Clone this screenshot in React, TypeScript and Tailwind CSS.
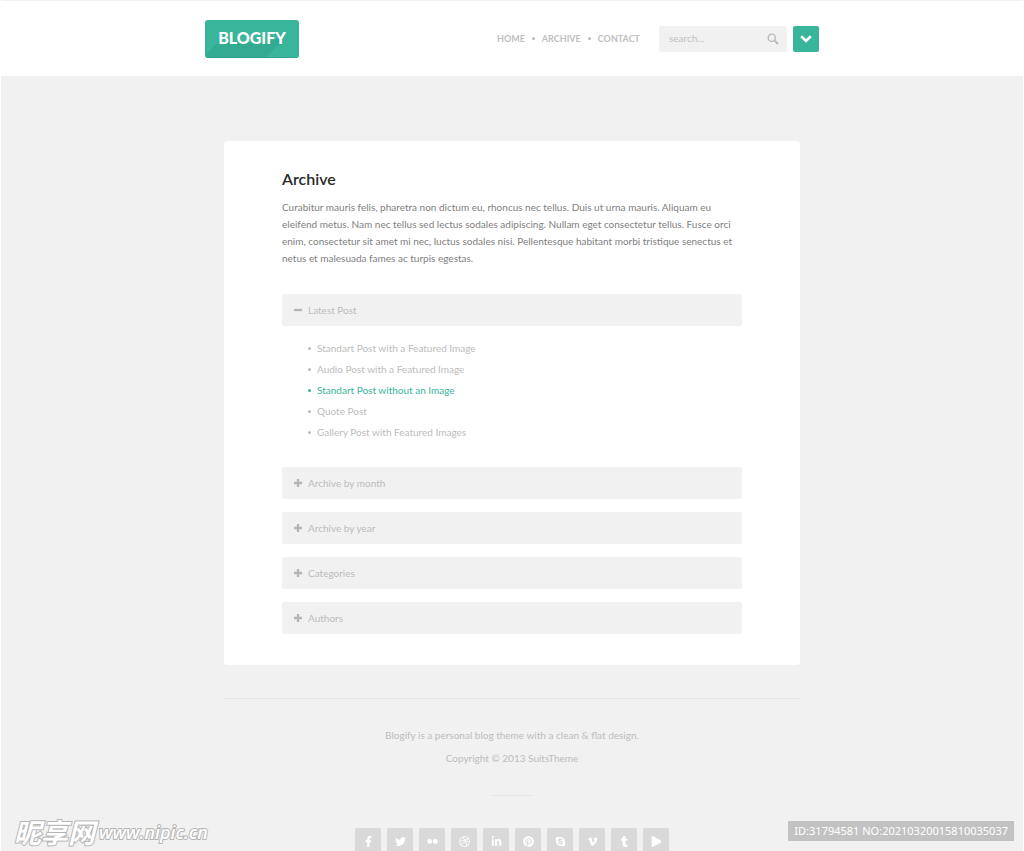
import { useState } from 'react';
import {
  FaDribbble,
  FaFacebookF,
  FaLinkedinIn,
  FaPinterest,
  FaPlay,
  FaSkype,
  FaTumblr,
  FaTwitter,
  FaVimeoV,
} from 'react-icons/fa';

const navLinks = ['Home', 'Archive', 'Contact'];

const sections = [
  {
    title: 'Latest Post',
    posts: [
      'Standart Post with a Featured Image',
      'Audio Post with a Featured Image',
      'Standart Post without an Image',
      'Quote Post',
      'Gallery Post with Featured Images',
    ],
  },
  { title: 'Archive by month', posts: [] },
  { title: 'Archive by year', posts: [] },
  { title: 'Categories', posts: [] },
  { title: 'Authors', posts: [] },
];

const activePost = 'Standart Post without an Image';

function FlickrDots({ className }: { className?: string }) {
  return (
    <svg viewBox="0 0 12 12" fill="currentColor" className={className}>
      <circle cx="2.9" cy="6" r="2.7" />
      <circle cx="9.1" cy="6" r="2.7" />
    </svg>
  );
}

const socials = [
  { name: 'Facebook', icon: FaFacebookF },
  { name: 'Twitter', icon: FaTwitter },
  { name: 'Flickr', icon: FlickrDots },
  { name: 'Dribbble', icon: FaDribbble },
  { name: 'LinkedIn', icon: FaLinkedinIn },
  { name: 'Pinterest', icon: FaPinterest },
  { name: 'Skype', icon: FaSkype },
  { name: 'Vimeo', icon: FaVimeoV },
  { name: 'Tumblr', icon: FaTumblr },
  { name: 'Video', icon: FaPlay },
];

function Logo() {
  return (
    <a href="#" className="relative flex h-[38px] w-[94px] items-center justify-center overflow-hidden rounded-[3px] border-b border-[#2fa58c] bg-[#38b59b]">
      <svg viewBox="0 0 94 38" className="absolute inset-0 h-full w-full" aria-hidden="true">
        <path d="M12 23 L0 35 V38 H62 L82 17 L60 23 Z" fill="#33ab92" />
      </svg>
      <span className="relative text-base font-black text-white">BLOGIFY</span>
    </a>
  );
}

function Header() {
  return (
    <header className="border-t border-[#f1f1f1] bg-white">
      <div className="mx-auto flex h-[75px] max-w-[614px] items-center">
        <Logo />
        <nav className="ml-auto mr-[19px]">
          <ul className="flex items-center text-[9px] font-bold text-[#c0c0c0]">
            {navLinks.map((link, i) => (
              <li key={link} className="flex items-center">
                {i > 0 && <span className="mx-[7px] h-[3px] w-[3px] rounded-full bg-[#bdbdbd]" />}
                <a href="#" className="uppercase">{link}</a>
              </li>
            ))}
          </ul>
        </nav>
        <form className="flex h-[26px] w-32 items-center rounded-[2px] bg-[#f1f1f1] pl-[10px] pr-2">
          <input
            type="text"
            aria-label="Search"
            placeholder="search..."
            className="min-w-0 flex-1 bg-transparent text-[10px] outline-none placeholder:text-[#c0c0c0]"
          />
          <button type="button" aria-label="Submit search">
            <svg viewBox="0 0 12 12" className="h-3 w-3" fill="none" stroke="#b8b8b8">
              <circle cx="4.8" cy="4.8" r="3.6" strokeWidth="1.3" />
              <path d="M7.4 7.4 L11 11" strokeWidth="1.8" />
            </svg>
          </button>
        </form>
        <button aria-label="Open menu" className="ml-[6px] flex h-[26px] w-[26px] items-center justify-center rounded-[2px] bg-[#38b59b]">
          <svg viewBox="0 0 12 8" className="h-2 w-3" fill="none" stroke="white" strokeWidth="2.6">
            <path d="M1.2 1.3 L6 5.9 L10.8 1.3" />
          </svg>
        </button>
      </div>
    </header>
  );
}

function Accordion() {
  const [open, setOpen] = useState('Latest Post');

  return (
    <div className="mt-[27px] flex flex-col gap-[13px]">
      {sections.map(({ title, posts }) => (
        <section key={title}>
          <button
            aria-expanded={open === title}
            onClick={() => setOpen(open === title ? '' : title)}
            className="flex h-8 w-full items-center gap-[6px] rounded-[2px] bg-[#f1f1f1] px-3 text-[10px] text-[#bcbcbc]"
          >
            <svg viewBox="0 0 8 8" className="h-2 w-2" fill="none" stroke="#b5b5b5" strokeWidth="2.3">
              <path d={open === title ? 'M0 4 H8' : 'M0 4 H8 M4 0 V8'} />
            </svg>
            {title}
          </button>
          {open === title && posts.length > 0 && (
            <ul className="pb-[11px] pl-[26px] pt-3">
              {posts.map((post) => (
                <li
                  key={post}
                  className={`flex items-center gap-[6px] text-[10px] leading-[21px] ${post === activePost ? 'text-[#38b59b]' : 'text-[#bcbcbc]'}`}
                >
                  <span className="h-[3px] w-[3px] rounded-full bg-current" />
                  <a href="#">{post}</a>
                </li>
              ))}
            </ul>
          )}
        </section>
      ))}
    </div>
  );
}

function Footer() {
  return (
    <footer className="mx-auto mt-[33px] flex max-w-[576px] flex-col items-center border-t border-[#e6e6e6] pt-[25px] text-[10px] leading-[23px] text-[#bcbcbc]">
      <p>Blogify is a personal blog theme with a clean &amp; flat design.</p>
      <p>Copyright © 2013 SuitsTheme</p>
      <hr className="mt-[25px] w-10 border-[#e6e6e6]" />
      <ul className="mt-8 flex gap-[6px] pb-8">
        {socials.map(({ name, icon: Icon }) => (
          <li key={name}>
            <a href="#" aria-label={name} className="flex h-[26px] w-[26px] items-center justify-center rounded-[2px] bg-[#d9d9d9] text-white">
              <Icon className="h-[11px] w-[11px]" />
            </a>
          </li>
        ))}
      </ul>
    </footer>
  );
}

export default function App() {
  return (
    <div className="relative h-screen overflow-hidden bg-[#f1f1f1] font-[Lato,sans-serif]">
      <div className="h-full overflow-y-auto border-x border-white">
        <Header />
        <main className="mx-auto mt-[65px] max-w-[576px] rounded-[3px] bg-white px-[58px] pb-[31px] pt-[27px]">
          <h1 className="text-base leading-[22px] font-semibold text-[#2a2a2a]">Archive</h1>
          <p className="mt-[9px] text-[10px] leading-[17px] text-[#808080]">
            Curabitur mauris felis, pharetra non dictum eu, rhoncus nec tellus. Duis ut urna mauris. Aliquam eu
            eleifend metus. Nam nec tellus sed lectus sodales adipiscing. Nullam eget consectetur tellus. Fusce orci
            enim, consectetur sit amet mi nec, luctus sodales nisi. Pellentesque habitant morbi tristique senectus et
            netus et malesuada fames ac turpis egestas.
          </p>
          <Accordion />
        </main>
        <Footer />
      </div>

      <div className="absolute bottom-1 left-[14px] flex items-center gap-1 italic text-white [paint-order:stroke] [-webkit-text-stroke:2px_#b5b5b5]">
        <span className="font-['Noto_Sans_CJK_SC',sans-serif] text-[27px] leading-[30px] font-bold">昵享网</span>
        <span className="font-['Open_Sans',sans-serif] text-lg leading-[30px] font-semibold">www.nipic.cn</span>
      </div>
      <div className="absolute bottom-[10px] right-[10px] flex h-5 items-center bg-[#c2c2c2] px-[6px] font-['Noto_Sans',sans-serif] text-[11px] text-white">
        ID:31794581 NO:20210320015810035037
      </div>
    </div>
  );
}
